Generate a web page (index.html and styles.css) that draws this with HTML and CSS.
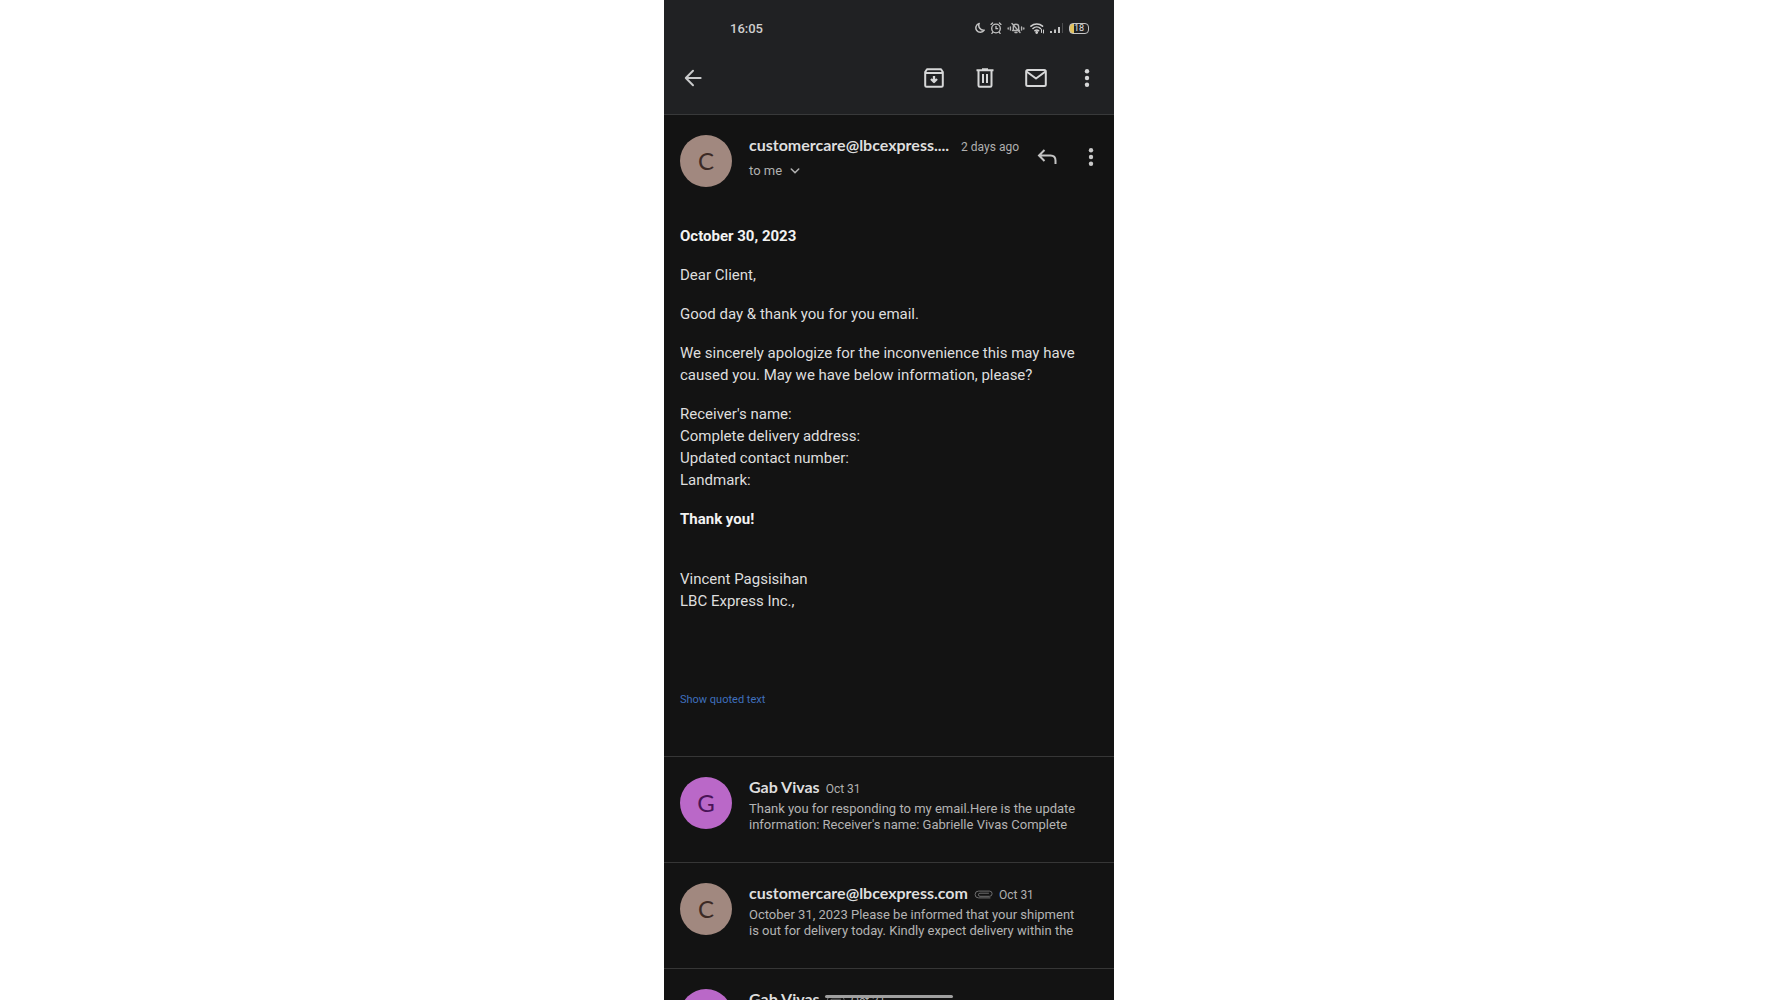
FILE: index.html
```
<!DOCTYPE html>
<html lang="en">
<head>
  <meta charset="UTF-8" />
  <meta name="viewport" content="width=device-width, initial-scale=1" />
  <title>Mail</title>
  <link rel="stylesheet" href="styles.css">
</head>
<body>
  <div class="phone">
    <header class="top">
      <!-- status bar -->
      <div class="status">
        <span class="clock">16:05</span>
        <div class="status-icons">
          <svg width="10" height="12" viewBox="0 0 10 12"><path d="M4.200 1.500A4.500 4.500 0 1 0 9.200 8.200A4.800 4.800 0 0 1 4.200 1.500Z" fill="none" stroke="#c4c4c4" stroke-width="1.500" stroke-linejoin="round"/></svg>
          <svg width="12" height="12" viewBox="0 0 12 12" fill="none" stroke="#c4c4c4" stroke-width="1.300" stroke-linecap="round"><circle cx="6" cy="6.500" r="4.300"/><path d="M6 4.300v2.400h1.600M1 2.400L2.600 1M11 2.400L9.400 1M2.800 10.400l-.9 1M9.200 10.400l.9 1"/></svg>
          <svg width="18" height="12" viewBox="0 0 18 12" fill="none" stroke="#b4b4b4" stroke-width="1.400" stroke-linecap="round"><path d="M5.500 8.500h7M6.300 8.300V5a2.700 2.700 0 0 1 5.400 0v3.300M8 10.500h2M5 1.500l8 9M3.400 5v3M14.600 5v3M1.200 6v1M16.800 6v1"/></svg>
          <svg width="15" height="12" viewBox="0 0 15 12" fill="none" stroke="#d0d0d0" stroke-width="1.600" stroke-linecap="round"><path d="M1 4.200a8.500 8.500 0 0 1 11.500 0M3 6.500a5.500 5.500 0 0 1 7.500 0M5 8.700a2.800 2.800 0 0 1 3.500 0"/><circle cx="6.700" cy="10.500" r=".6" fill="#d0d0d0"/><path d="M11.500 7.500v3M13.500 8v3" stroke-width="1"/></svg>
          <svg width="14" height="12" viewBox="0 0 14 12" fill="#c4c4c4"><rect x="0" y="9" width="2" height="2"/><rect x="4" y="7.500" width="2" height="3.500"/><rect x="8" y="5" width="2" height="6"/><rect x="12" y="1" width="1" height="10" fill="#4c4d4f"/></svg>
          <div class="battery"><span>18</span></div>
        </div>
      </div>
      <!-- toolbar -->
      <nav class="toolbar">
        <button class="icon-button back" aria-label="Back">
          <svg width="18" height="18" viewBox="0 0 20 20" fill="none" stroke="#c9cacb" stroke-width="2.200" stroke-linecap="round" stroke-linejoin="round"><path d="M18.500 10H2.500M10 2l-8 8 8 8"/></svg>
        </button>
        <button class="icon-button" aria-label="Archive">
          <svg width="20" height="20" viewBox="0 0 20 20" fill="none" stroke="#d6d7d8" stroke-width="2" stroke-linejoin="round"><path d="M1.200 4L3 1.200h14L18.800 4v13.500q0 1.300-1.300 1.300h-15q-1.300 0-1.300-1.300zM1.200 5h17.600"/><path d="M10 8v5.500M7 11l3 3 3-3" stroke-width="2.300"/></svg>
        </button>
        <button class="icon-button" aria-label="Delete">
          <svg width="20" height="20" viewBox="0 0 20 20" fill="none" stroke="#d6d7d8" stroke-width="2" stroke-linejoin="round"><path d="M1.500 2.200h17M7 1.200h6M3.500 2.500v15q0 1.300 1.300 1.300h10.400q1.300 0 1.300-1.300v-15M8 6v9M12 6v9"/></svg>
        </button>
        <button class="icon-button" aria-label="Mark as unread">
          <svg width="22" height="20" viewBox="0 0 22 20" fill="none" stroke="#d6d7d8" stroke-width="2" stroke-linejoin="round"><rect x="1.200" y="2" width="19.600" height="16" rx="1.500"/><path d="M1.500 3.500l9.500 7 9.500-7"/></svg>
        </button>
        <button class="icon-button" aria-label="More options">
          <svg width="6" height="20" viewBox="0 0 6 20" fill="#d6d7d8"><circle cx="3" cy="3.200" r="2.200"/><circle cx="3" cy="10" r="2.200"/><circle cx="3" cy="16.800" r="2.200"/></svg>
        </button>
      </nav>
    </header>

    <main>
      <!-- open message -->
      <article class="message">
        <div class="message-head">
          <div class="avatar tan">C</div>
          <div class="who">
            <div class="name-line">
              <span class="name">customercare@lbcexpress....</span>
              <span class="date">2 days ago</span>
            </div>
            <button class="to-me">to me
              <svg width="10" height="8" viewBox="0 0 10 8" fill="none" stroke="#b0b0b0" stroke-width="1.600" stroke-linecap="round"><path d="M1.300 2L5 5.700 8.700 2"/></svg>
            </button>
          </div>
          <button class="icon-button" aria-label="Reply">
            <svg width="20" height="18" viewBox="0 0 20 18" fill="none" stroke="#c4c4c4" stroke-width="2"><path d="M7.500 2L2 7.500 7.500 13M2 7.500h11.500q5 0 5 5V16"/></svg>
          </button>
          <button class="icon-button" aria-label="More message options">
            <svg width="6" height="20" viewBox="0 0 6 20" fill="#c9c9c9"><circle cx="3" cy="3.200" r="2.200"/><circle cx="3" cy="10" r="2.200"/><circle cx="3" cy="16.800" r="2.200"/></svg>
          </button>
        </div>
        <div class="text">
          <p><strong>October 30, 2023</strong></p>
          <p>Dear Client,</p>
          <p>Good day &amp; thank you for you email.</p>
          <p>We sincerely apologize for the inconvenience this may have caused you. May we have below information, please?</p>
          <p>Receiver's name:<br>Complete delivery address:<br>Updated contact number:<br>Landmark:</p>
          <p><strong>Thank you!</strong></p>
          <p class="signature">Vincent Pagsisihan<br>LBC Express Inc.,</p>
          <a class="quoted" href="#">Show quoted text</a>
        </div>
      </article>

      <!-- rest of the thread -->
      <article class="row">
        <div class="avatar purple">G</div>
        <div class="summary">
          <div class="name-line">
            <span class="name">Gab Vivas</span>
            <span class="date">Oct 31</span>
          </div>
          <p class="preview">Thank you for responding to my email.Here is the update information: Receiver's name: Gabrielle Vivas Complete</p>
        </div>
      </article>
      <article class="row">
        <div class="avatar tan">C</div>
        <div class="summary">
          <div class="name-line">
            <span class="name">customercare@lbcexpress.com</span>
            <svg class="clip" width="19" height="9" viewBox="0 0 19 9" fill="none" stroke="#6e6e6e" stroke-linecap="round"><path d="M16 7.900H4.500a3.400 3.400 0 0 1 0-6.800h11a2.600 2.600 0 0 1 0 5.200H6a1.500 1.500 0 0 1 0-3.100h8.500"/></svg>
            <span class="date">Oct 31</span>
          </div>
          <p class="preview">October 31, 2023 Please be informed that your shipment is out for delivery today. Kindly expect delivery within the</p>
        </div>
      </article>
      <article class="row">
        <div class="avatar purple">G</div>
        <div class="summary">
          <div class="name-line">
            <span class="name">Gab Vivas</span>
            <svg class="clip" width="19" height="9" viewBox="0 0 19 9" fill="none" stroke="#6e6e6e" stroke-linecap="round"><path d="M16 7.900H4.500a3.400 3.400 0 0 1 0-6.800h11a2.600 2.600 0 0 1 0 5.200H6a1.500 1.500 0 0 1 0-3.100h8.500"/></svg>
            <span class="date">Oct 31</span>
          </div>
        </div>
      </article>
    </main>
    <div class="home-bar"></div>
  </div>
</body>
</html>
```
FILE: styles.css
```
* {
  box-sizing: border-box;
}
body {
  margin: 0;
  background: #fff;
  font-family: Roboto, "Liberation Sans", sans-serif;
}
button {
  padding: 0;
  border: 0;
  background: none;
  font: inherit;
  color: inherit;
  cursor: pointer;
}
svg {
  display: block;
  flex: none;
}
.phone {
  position: relative;
  max-width: 450px;
  height: 100vh;
  margin: 0 auto;
  overflow: hidden;
  background: #131313;
  color: #dedede;
}

/* status bar + toolbar */
.top {
  padding-bottom: 14px;
  background: #202123;
  border-bottom: 1px solid #38393a;
}
.status {
  display: flex;
  align-items: center;
  justify-content: space-between;
  height: 56px;
  padding: 0 25px 0 66px;
}
.clock {
  font-size: 13px;
  font-weight: 500;
  color: #cfcfcf;
}
.status-icons {
  display: flex;
  align-items: center;
  gap: 5px;
}
.battery {
  width: 20px;
  height: 11px;
  border: 1px solid #c4c4c4;
  border-radius: 4px;
  background: linear-gradient(to right, #e2c25c 4px, transparent 4px);
  font-size: 9px;
  line-height: 9px;
  text-align: center;
  color: #e0e0e0;
}
.toolbar {
  display: flex;
  align-items: center;
  height: 44px;
  padding: 0 11px 0 13px;
}
.icon-button {
  display: flex;
  align-items: center;
  justify-content: center;
  width: 32px;
  height: 32px;
  margin-left: 19px;
}
.icon-button.back {
  margin: 0 auto 0 0;
}

/* open message */
.message-head {
  display: flex;
  align-items: flex-start;
  padding: 20px 7px 0 16px;
}
.message-head .icon-button {
  margin: 6px 0 0 12px;
}
.avatar {
  flex: none;
  width: 52px;
  height: 52px;
  margin-right: 17px;
  border-radius: 50%;
  font-family: Lato, sans-serif;
  font-size: 24px;
  line-height: 52px;
  text-align: center;
}
.tan {
  background: #a1887f;
  color: #3c2a25;
}
.purple {
  background: #ba68c8;
  color: #4a1458;
}
.who {
  flex: 1;
  min-width: 0;
}
.name-line {
  display: flex;
  align-items: baseline;
  height: 20px;
  line-height: 20px;
  white-space: nowrap;
}
.name {
  font-family: Lato, sans-serif;
  font-size: 16px;
  font-weight: 700;
}
.date {
  margin-left: 6px;
  font-size: 12px;
  color: #b0b0b0;
}
.who .date {
  margin-left: auto;
}
.to-me {
  display: flex;
  align-items: center;
  gap: 8px;
  margin-top: 6px;
  font-size: 13px;
  line-height: 20px;
  color: #b0b0b0;
}
.text {
  margin: 32px 8px 0 0;
  padding: 6px 16px 45px;
  font-size: 15px;
  line-height: 22px;
}
.text p {
  margin: 0 0 17px;
}
.text strong {
  color: #f2f2f2;
}
.text .signature {
  margin: 38px 0 77px;
}
.quoted {
  display: block;
  font-size: 11px;
  color: #3f6fbd;
  text-decoration: none;
}

/* thread rows */
.row {
  display: flex;
  height: 106px;
  padding: 20px 30px 0 16px;
  border-top: 1px solid #363636;
}
.preview {
  margin: 4px 0 0;
  font-size: 13px;
  line-height: 16px;
  color: #b4b4b4;
}
.clip {
  margin-left: 6px;
}

.home-bar {
  position: absolute;
  bottom: 2px;
  left: 50%;
  width: 128px;
  height: 3px;
  margin-left: -64px;
  border-radius: 2px;
  background: #a0a0a0;
}
```
